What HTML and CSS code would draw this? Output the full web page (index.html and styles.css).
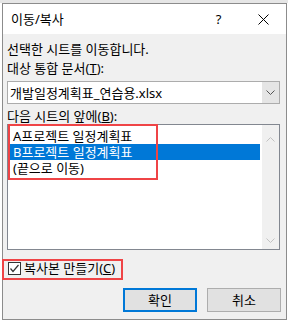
FILE: index.html
```html
<!DOCTYPE html>
<html lang="ko">
<head>
<meta charset="utf-8">
<title>이동/복사</title>
<link rel="stylesheet" href="styles.css">
</head>
<body>
<div class="sheet-top"></div>
<div class="dialog">
  <div class="titlebar">
    <span class="title">이동/복사</span>
    <span class="tb-btn help">?</span>
    <span class="tb-btn close">
      <svg width="11" height="11" viewBox="0 0 11 11"><path d="M0.5 0.5L10.5 10.5M10.5 0.5L0.5 10.5" stroke="#000" stroke-width="1" fill="none"/></svg>
    </span>
  </div>
  <div class="content">
    <p class="line intro">선택한 시트를 이동합니다.</p>
    <p class="line">대상 통합 문서(<u>T</u>):</p>
    <div class="combo">
      <span class="combo-text">개발일정계획표_연습용.xlsx</span>
      <span class="combo-btn">
        <svg width="9" height="5" viewBox="0 0 9 5"><path d="M0.5 0.5L4.5 4.5L8.5 0.5" stroke="#555" stroke-width="1" fill="none"/></svg>
      </span>
    </div>
    <p class="line label-list">다음 시트의 앞에(<u>B</u>):</p>
    <div class="listbox">
      <ul class="items">
        <li class="item">A프로젝트 일정계획표</li>
        <li class="item selected">B프로젝트 일정계획표</li>
        <li class="item">(끝으로 이동)</li>
      </ul>
      <div class="scrollbar">
        <span class="sb-btn sb-up">
          <svg width="9" height="5" viewBox="0 0 9 5"><path d="M0.5 4.5L4.5 0.5L8.5 4.5" stroke="#c2c2c2" stroke-width="1" fill="none"/></svg>
        </span>
        <span class="sb-btn">
          <svg width="9" height="5" viewBox="0 0 9 5"><path d="M0.5 0.5L4.5 4.5L8.5 0.5" stroke="#c2c2c2" stroke-width="1" fill="none"/></svg>
        </span>
      </div>
    </div>
    <label class="check">
      <span class="box">
        <svg width="11" height="11" viewBox="0 0 11 11"><path d="M1.5 5.5L4 8.5L9.5 2" stroke="#333" stroke-width="1.2" fill="none"/></svg>
      </span>
      <span class="check-text">복사본 만들기(<u>C</u>)</span>
    </label>
    <div class="buttons">
      <button class="btn default">확인</button>
      <button class="btn">취소</button>
    </div>
  </div>
  <div class="mark mark-list"></div>
  <div class="mark mark-check"></div>
</div>
</body>
</html>
```

FILE: styles.css
```css
* { box-sizing: border-box; }

html, body {
  margin: 0;
  padding: 0;
}

body {
  width: 288px;
  height: 324px;
  overflow: hidden;
  background: #ffffff;
  font-family: "Noto Sans", "Noto Sans CJK KR", sans-serif;
  font-size: 13px;
  color: #000;
  position: relative;
}

.sheet-top {
  position: absolute;
  left: 0;
  top: 0;
  width: 288px;
  height: 3px;
  background: #e6e6e6;
}

.dialog {
  position: relative;
  margin: 3px 0 0 2px;
  width: 285px;
  height: 317px;
  border: 1px solid #8c8c8c;
  background: #f0f0f0;
  display: flex;
  flex-direction: column;
}

.titlebar {
  height: 30px;
  flex: none;
  background: #ffffff;
  display: flex;
  align-items: center;
  padding-left: 8px;
}

.title {
  flex: 1;
  line-height: 16px;
}

.tb-btn {
  width: 45px;
  height: 30px;
  display: flex;
  align-items: center;
  justify-content: center;
}

.help {
  font-family: "Noto Sans", sans-serif;
  font-size: 13px;
}

.content {
  flex: 1;
  padding: 0 4px 0 4px;
  display: flex;
  flex-direction: column;
}

.line {
  margin: 0;
  line-height: 16px;
  white-space: nowrap;
}

.intro { margin-top: 7px; }
.line + .line { margin-top: 3px; }

.combo {
  margin-top: 5px;
  height: 23px;
  width: 273px;
  border: 1px solid #acacac;
  background: #fff;
  display: flex;
  align-items: center;
}

.combo-text {
  flex: 1;
  padding-left: 2px;
  line-height: 16px;
}

.combo-btn {
  width: 17px;
  height: 21px;
  background: #e5e5e5;
  display: flex;
  align-items: center;
  justify-content: center;
}

.label-list { margin-top: 4px; }

.listbox {
  height: 126px;
  width: 273px;
  border: 1px solid #828790;
  background: #fff;
  display: flex;
}

.items {
  flex: 1;
  list-style: none;
  margin: 0;
  padding: 3px 2px 0 2px;
}

.item {
  height: 16px;
  line-height: 16px;
  padding-left: 3px;
  white-space: nowrap;
}

.item.selected {
  background: #0078d7;
  color: #fff;
}

.scrollbar {
  width: 17px;
  background: #f0f0f0;
  display: flex;
  flex-direction: column;
  justify-content: space-between;
}

.sb-btn {
  height: 17px;
  display: flex;
  align-items: center;
  justify-content: center;
}

.sb-up {
  margin-top: 6px;
}

.check {
  margin-top: 10px;
  display: flex;
  align-items: center;
  gap: 3px;
  height: 16px;
  padding-left: 1px;
}

.box {
  width: 13px;
  height: 13px;
  border: 1px solid #333;
  background: #fff;
  display: flex;
  align-items: center;
  justify-content: center;
}

.check-text { line-height: 16px; }

.buttons {
  margin-top: 12px;
  display: flex;
  justify-content: flex-end;
  gap: 10px;
  padding-right: 1px;
}

.btn {
  width: 74px;
  height: 24px;
  font: inherit;
  color: #000;
  background: #e1e1e1;
  border: 1px solid #adadad;
  padding: 0;
  line-height: 16px;
}

.btn.default {
  border: 2px solid #0078d7;
}

.mark {
  position: absolute;
  border: 2px solid #ef4446;
  pointer-events: none;
}

.mark-list {
  left: 5px;
  top: 120px;
  width: 150px;
  height: 56px;
}

.mark-check {
  left: -1px;
  top: 255px;
  width: 121px;
  height: 21px;
}
```
